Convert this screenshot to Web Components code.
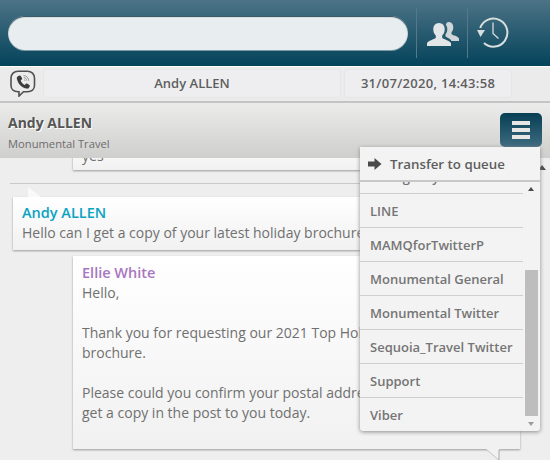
<!DOCTYPE html>
<html>
<head>
<meta charset="utf-8">
<style>
  html, body { margin: 0; height: 100%; overflow: hidden; }
  body { font-family: "Open Sans", "Noto Sans", sans-serif; background: #eee; }
  chat-app { width: 550px; height: 460px; }
</style>
</head>
<body>
<chat-app></chat-app>
<script>
;(function(){

  const icons = {
    users: `<svg width="32" height="24" viewBox="0 0 32 24"><path fill="#cfd6d8" d="M21.500 0c3 0 4.800 2.200 4.800 5.300 0 2.200-.8 4-1.800 5v2c1 1 6.500 1.800 7.500 4.300V19H24.500c-1-2-3.800-3.300-6-4.500v-2.300c1.200-1.300 1.800-2.800 1.800-4.700 0-2.300-.5-3.700-1.500-4.800C19.500.6 20.400 0 21.500 0z"/><path fill="#e3e6e6" d="M12 1c3.600 0 5.700 2.800 5.700 6.300 0 2.900-1 4.900-2.500 6.200v2.400c1.800 1.600 7.600 2.400 8.800 5.300V24H0v-2.800c1.200-2.900 7-3.700 8.800-5.300v-2.400C7.300 12.200 6.300 10.200 6.300 7.300 6.300 3.800 8.400 1 12 1z"/></svg>`,
    history: `<svg width="32" height="32" viewBox="0 0 32 32"><g fill="none" stroke="#d8dddd"><path stroke-width="2" d="M3.200 11A14 14 0 1 1 7 26"/><path stroke-width="1.300" d="M16 5.500V16.500l5.500 5"/></g><path fill="#d8dddd" d="M0 13h8l-4.500 7z"/></svg>`,
    viber: `<svg width="26" height="27" viewBox="0 0 26 27"><path fill="none" stroke="#505050" stroke-width="1.600" d="M8 1.200h9.500c4 0 7 2.800 7 6.800v7.500c0 4-3 6.200-7 6.200h-4L9 26v-4.300H8c-4 0-7-2.200-7-6.200V8c0-4 3-6.800 7-6.800z"/><path fill="#3c3c3c" d="M7.500 6.500l2-1c.5-.2 1 0 1.300.5l1.300 2.300c.2.500 0 1-.4 1.300l-1 .8c.8 2 2.200 3.500 4.200 4.500l.9-1.100c.3-.4.800-.5 1.300-.3l2.300 1.400c.5.300.6.800.4 1.300l-1 1.800c-.4.600-1 .8-1.800.6C11.500 17.800 8 14 6.800 8.500c-.1-.8.100-1.500.7-2z"/><path fill="none" stroke="#8f8f8f" stroke-width=".9" d="M13.500 5.500c3 .2 5 2.300 5.300 5.300M13.800 7.600c1.800.2 2.800 1.300 3 3M14 9.600c.7.100 1 .5 1.100 1.100"/></svg>`,
    arrow: `<svg width="14" height="12" viewBox="0 0 14 12"><path fill="#4a4a4a" d="M0 3.500h6.500V0L13.500 6l-7 6V8.500H0z"/></svg>`,
    tail: `<svg width="14" height="12" viewBox="0 0 14 12"><path fill="#f1f1f1" d="M0 0h13v11z"/><path fill="none" stroke="#c4c4c4" d="M0 .2l13 11"/><path fill="none" stroke="#a8a8a8" d="M13 1v11"/></svg>`,
  };

  // small helper so every element below is just a template + a class
  const define = (name, html) => {
    customElements.define(name, class extends HTMLElement {
      constructor () {
        super();
        this.attachShadow({ mode : 'open' }).innerHTML = html;
      }
    });
  };

  define('top-bar', `
    <style>
      :host { display: flex; align-items: center; height: 66px; box-sizing: border-box; padding-left: 8px;
        background: linear-gradient(#4d7386, #03435a); }
      .search { width: 400px; height: 34px; box-sizing: border-box; border-radius: 17px; background: #e8edf0;
        box-shadow: inset 0 1px 1px #2b4a58, 0 1px 0 #7d99a5; }
      .sep { width: 1px; height: 50px; background: #55798a; }
      .sep.a { margin-left: 8px; }
      .btn { display: flex; justify-content: center; align-items: center; width: 50px; height: 50px; }
      .users svg { margin-left: 1px; margin-top: 2px; }
    </style>
    <div class="search"></div>
    <div class="sep a"></div>
    <div class="btn users">${icons.users}</div>
    <div class="sep"></div>
    <div class="btn">${icons.history}</div>
  `);

  define('info-strip', `
    <style>
      :host { display: flex; align-items: center; height: 36px; box-sizing: border-box; margin-top: 1px;
        padding: 0 0 2px 10px; background: #ebebeb; border-bottom: 2px solid #c4c4c4;
        font: 600 13px "Open Sans", sans-serif; color: #5e5e5e; }
      .ic { width: 26px; height: 27px; margin-right: 8px; }
      .f { display: flex; align-items: center; justify-content: center; height: 27px; background: #eeeef0;
        border-radius: 3px; box-shadow: 0 0 0 1px #e6e6e6; }
      .name { width: 296px; margin-right: 5px; }
      .time { width: 166px; letter-spacing: .3px; }
    </style>
    <div class="ic">${icons.viber}</div>
    <div class="f name">Andy ALLEN</div>
    <div class="f time">31/07/2020, 14:43:58</div>
  `);

  define('contact-head', `
    <style>
      :host { display: flex; justify-content: space-between; height: 55px; box-sizing: border-box;
        padding: 10px 8px 0 8px; background: linear-gradient(#ebebeb, #cfcfcd); position: relative; z-index: 1; }
      .n { font: 700 14px/20px "Open Sans", sans-serif; color: #555; text-shadow: 1px 1px 0 #fff; }
      .c { font: 11.200px/17px "Open Sans", sans-serif; color: #6d6d6d; margin-top: 2px; }
      .menu { display: flex; flex-direction: column; justify-content: center; gap: 3px; align-items: center;
        width: 42px; height: 34px; border-radius: 5px; background: linear-gradient(#063f55, #3f6b7f); }
      .menu i { width: 18px; height: 4px; background: #e6e6e6; }
    </style>
    <div>
      <div class="n">Andy ALLEN</div>
      <div class="c">Monumental Travel</div>
    </div>
    <div class="menu"><i></i><i></i><i></i></div>
  `);

  define('chat-bubble', `
    <style>
      :host { display: block; position: relative; box-sizing: border-box; padding: 6px 10px 0 9px;
        background: linear-gradient(#fff, #f1f1f1); box-shadow: 0 1px 2px #9a9a9a;
        font: 14px/20px "Open Sans", sans-serif; color: #707070; white-space: nowrap; }
      .who { font-size: 14.5px; font-weight: 600; color: var(--who, #666); }
    </style>
    <div class="who"><slot name="who"></slot></div>
    <slot></slot>
  `);

  define('queue-menu', `
    <style>
      :host { display: block; position: absolute; left: 360px; top: 147px; width: 180px; height: 284px;
        background: #f3f3f3; box-shadow: 0 1px 4px #8a8a8a; z-index: 2; border-radius: 0 0 3px 3px;
        font: 600 13px "Open Sans", sans-serif; color: #757575; overflow: hidden; }
      .head { display: flex; align-items: center; gap: 8px; padding-left: 8px; box-sizing: border-box;
        border-bottom: 2px solid #c8c8c8; height: 35px; color: #5e5e5e; font-size: 13.3px; }
      .list { position: relative; height: 249px; overflow: hidden; }
      .scroll { position: absolute; left: 0; top: -22px; width: 163px; }
      .scroll div { display: flex; align-items: center; height: 33px; padding-left: 10px; border-bottom: 1px solid #cfcfcf; }
      .scroll div:last-child { border-bottom: 0; }
      .bar { position: absolute; right: 2px; top: 0; bottom: 0; width: 13px; }
      .thumb { position: absolute; left: 0; right: 0; top: 88px; height: 146px; background: #bdbdbd; }
      .up, .down { position: absolute; left: 3px; border: 3.500px solid transparent; }
      .up { top: 5px; border-bottom: 4px solid #4a4a4a; border-top: 0; }
      .down { bottom: 5px; border-top: 4px solid #9c9c9c; border-bottom: 0; }
    </style>
    <div class="head">${icons.arrow}<span>Transfer to queue</span></div>
    <div class="list">
      <div class="scroll">
        <div>Emergency</div>
        <div>LINE</div>
        <div>MAMQforTwitterP</div>
        <div>Monumental General</div>
        <div>Monumental Twitter</div>
        <div>Sequoia_Travel Twitter</div>
        <div>Support</div>
        <div>Viber</div>
      </div>
      <div class="bar"><div class="up"></div><div class="thumb"></div><div class="down"></div></div>
    </div>
  `);

  define('chat-log', `
    <style>
      :host { display: block; flex: 1; overflow: hidden; background: #eee; }
      .top { margin: -18px 0 0 73px; width: 447px; height: 30px; }
      hr { margin: 13px 0 0 10px; width: 530px; border: 0; border-top: 1px solid #c9c9c9; height: 0; }
      .tail-in { position: absolute; left: 15px; top: -10px; width: 0; height: 0;
        border-right: 13px solid transparent; border-bottom: 10px solid #f9f9f9; }
      .in { margin: 13px 0 0 13px; width: 420px; height: 53px; }
      .out { margin: 6px 0 0 73px; width: 447px; height: 193px; padding-top: 7px; }
      .tail-out { position: absolute; right: 20px; top: 100%; width: 14px; height: 12px; line-height: 0; }
      .ln { display: block; }
      .gap { height: 20px; }
    </style>
    <chat-bubble class="top">yes</chat-bubble>
    <hr>
    <chat-bubble class="in" style="--who:#0aa3c2">
      <span slot="who">Andy ALLEN</span>
      Hello can I get a copy of your latest holiday brochure?
      <div class="tail-in"></div>
    </chat-bubble>
    <chat-bubble class="out" style="--who:#a877bf">
      <span slot="who">Ellie White</span>
      <span class="ln">Hello,</span>
      <div class="gap"></div>
      <span class="ln">Thank you for requesting our 2021 Top Holidays</span>
      <span class="ln">brochure.</span>
      <div class="gap"></div>
      <span class="ln">Please could you confirm your postal address and we'll</span>
      <span class="ln">get a copy in the post to you today.</span>
      <div class="tail-out">${icons.tail}</div>
    </chat-bubble>
  `);

  define('chat-app', `
    <style>
      :host { display: flex; flex-direction: column; position: relative; overflow: hidden; background: #fff; }
      .up { position: absolute; left: 538px; top: 165px; border: 4px solid transparent; border-top: 0; border-bottom: 5px solid #4a4a4a; }
    </style>
    <top-bar></top-bar>
    <info-strip></info-strip>
    <contact-head></contact-head>
    <chat-log></chat-log>
    <queue-menu></queue-menu>
    <div class="up"></div>
  `);

})();
</script>
</body>
</html>
